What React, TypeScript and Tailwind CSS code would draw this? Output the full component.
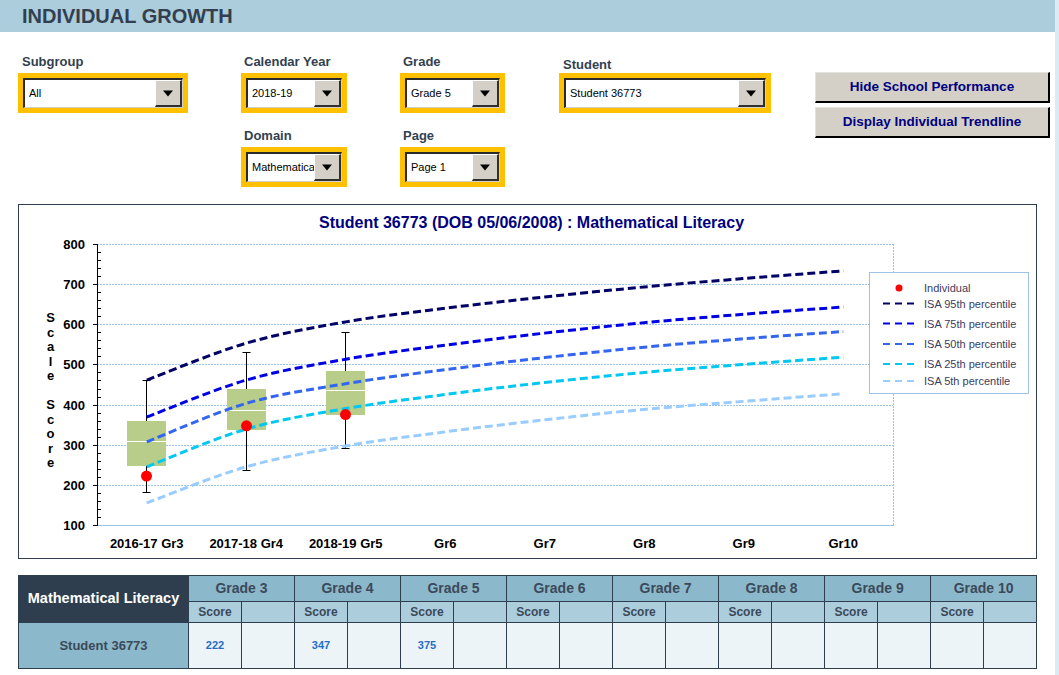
import React from 'react';

// chart geometry (page coordinates)
const Y0 = 525;
const PX = 281 / 700;
const yOf = (v: number) => Y0 - (v - 100) * PX;
const xs = [146.75, 246.25, 345.75, 445.25, 544.75, 644.25, 743.75, 843.25];
const cats = ['2016-17 Gr3', '2017-18 Gr4', '2018-19 Gr5', 'Gr6', 'Gr7', 'Gr8', 'Gr9', 'Gr10'];

const percentiles = [
  { label: 'ISA 95th percentile', color: '#000066', values: [461, 553, 606, 640, 668, 693, 714, 733] },
  { label: 'ISA 75th percentile', color: '#0000e6', values: [369, 461, 513, 548, 578, 604, 625, 643] },
  { label: 'ISA 50th percentile', color: '#3366f0', values: [307, 403, 452, 487, 517, 543, 564, 582] },
  { label: 'ISA 25th percentile', color: '#00c8f0', values: [245, 339, 390, 425, 455, 480, 500, 518] },
  { label: 'ISA 5th percentile', color: '#99ccff', values: [155, 245, 297, 332, 362, 388, 408, 427] },
];

// box plots: pixel values read from the school performance boxes
const boxes = [
  { x: 146.5, top: 421, bottom: 466, median: 441.5, wTop: 380.5, wBottom: 492.5, score: 222 },
  { x: 246.5, top: 389, bottom: 430, median: 410.5, wTop: 352.5, wBottom: 470.5, score: 347 },
  { x: 345.5, top: 371, bottom: 415, median: 390.5, wTop: 332.5, wBottom: 448.5, score: 375 },
];

const smooth = (pts: [number, number][]) => {
  let d = `M${pts[0][0]},${pts[0][1]}`;
  for (let i = 0; i < pts.length - 1; i++) {
    const p0 = pts[i - 1] || pts[i];
    const p1 = pts[i];
    const p2 = pts[i + 1];
    const p3 = pts[i + 2] || p2;
    const c1x = p1[0] + (p2[0] - p0[0]) / 6;
    const c1y = p1[1] + (p2[1] - p0[1]) / 6;
    const c2x = p2[0] - (p3[0] - p1[0]) / 6;
    const c2y = p2[1] - (p3[1] - p1[1]) / 6;
    d += ` C${c1x},${c1y} ${c2x},${c2y} ${p2[0]},${p2[1]}`;
  }
  return d;
};

const Arrow = () => (
  <svg width="12" height="7" viewBox="0 0 12 7">
    <path d="M1 0.5 L11 0.5 L6 6.5 Z" fill="#000" />
  </svg>
);

const Select = ({ value, className }: { value: string; className: string }) => (
  <div className={`bg-[#ffc000] p-[5px] h-[40px] ${className}`}>
    <div className="h-[30px] bg-white border-t-2 border-l-2 border-t-[#2a2a2a] border-l-[#2a2a2a] border-b border-r border-b-[#d4d0c8] border-r-[#d4d0c8] flex items-center overflow-hidden">
      <span className="pl-[4px] text-[11px] text-black whitespace-nowrap flex-1 overflow-hidden">{value}</span>
      <div className="w-[27px] h-[27px] shrink-0 bg-[#d4d0c8] border-t border-l border-t-white border-l-white border-b-2 border-r-2 border-b-[#303030] border-r-[#303030] flex items-center justify-center">
        <Arrow />
      </div>
    </div>
  </div>
);

const Label = ({ children, className = '' }: { children: React.ReactNode; className?: string }) => (
  <div className={`text-[13px] font-bold text-[#333f4f] leading-[16px] ${className}`}>{children}</div>
);

const Chart = () => {
  const minor: number[] = [];
  for (let v = 100; v <= 800; v += 20) if (v % 100 !== 0) minor.push(v);
  const majors = [100, 200, 300, 400, 500, 600, 700, 800];
  const word1 = ['S', 'c', 'a', 'l', 'e'];
  const word2 = ['S', 'c', 'o', 'r', 'e'];
  const legendY = [303.5, 323.5, 344, 364, 381];
  return (
    <svg width="1017" height="353" viewBox="19 205 1017 353" className="block" fontFamily="'Liberation Sans', Arial, sans-serif">
      <text x="531.5" y="228" textAnchor="middle" fontSize="16" fontWeight="bold" fill="#000080">
        Student 36773 (DOB 05/06/2008) : Mathematical Literacy
      </text>

      {/* gridlines */}
      {majors.slice(1).map((v) => (
        <line key={v} x1="97" x2="893" y1={Math.round(yOf(v)) + 0.5} y2={Math.round(yOf(v)) + 0.5} stroke="#9dc3e6" strokeDasharray="2 1" />
      ))}
      <line x1="893.5" x2="893.5" y1="244" y2="525" stroke="#9dc3e6" strokeDasharray="2 1" />
      <line x1="97" x2="894" y1="525.5" y2="525.5" stroke="#9dc3e6" />

      {/* left axis */}
      <line x1="97.5" x2="97.5" y1="244" y2="526" stroke="#000" />
      {majors.map((v) => (
        <line key={v} x1="93" x2="97" y1={Math.round(yOf(v)) + 0.5} y2={Math.round(yOf(v)) + 0.5} stroke="#000" />
      ))}
      {minor.map((v) => (
        <line key={v} x1="98" x2="101" y1={Math.round(yOf(v)) + 0.5} y2={Math.round(yOf(v)) + 0.5} stroke="#000" />
      ))}
      {majors.map((v) => (
        <text key={v} x="85" y={yOf(v) + 5} textAnchor="end" fontSize="13" fontWeight="bold" fill="#000">
          {v}
        </text>
      ))}
      {word1.map((c, i) => (
        <text key={'a' + i} x="50.5" y={322 + i * 14.6} textAnchor="middle" fontSize="13" fontWeight="bold" fill="#000">
          {c}
        </text>
      ))}
      {word2.map((c, i) => (
        <text key={'b' + i} x="50.5" y={409 + i * 14.6} textAnchor="middle" fontSize="13" fontWeight="bold" fill="#000">
          {c}
        </text>
      ))}

      {/* category labels */}
      {cats.map((c, i) => (
        <text key={c} x={xs[i]} y="548" textAnchor="middle" fontSize="13" fontWeight="bold" fill="#000">
          {c}
        </text>
      ))}

      {/* whiskers and boxes */}
      {boxes.map((b) => (
        <g key={b.x}>
          <line x1={b.x} x2={b.x} y1={b.wTop} y2={b.wBottom} stroke="#000" />
          <line x1={b.x - 4} x2={b.x + 4} y1={b.wTop} y2={b.wTop} stroke="#000" />
          <line x1={b.x - 4} x2={b.x + 4} y1={b.wBottom} y2={b.wBottom} stroke="#000" />
          <rect x={b.x - 19.5} y={b.top} width="39" height={b.bottom - b.top} fill="#b7cd89" />
          <line x1={b.x - 19.5} x2={b.x + 19.5} y1={b.median} y2={b.median} stroke="#fff" />
        </g>
      ))}

      {/* percentile curves */}
      {percentiles.map((p) => (
        <path
          key={p.label}
          d={smooth(p.values.map((v, i) => [xs[i], yOf(v)] as [number, number]))}
          fill="none"
          stroke={p.color}
          strokeWidth="3"
          strokeDasharray="8 4"
        />
      ))}

      {/* individual scores */}
      {boxes.map((b) => (
        <circle key={b.x} cx={b.x} cy={yOf(b.score)} r="5.5" fill="#ff0000" />
      ))}

      {/* legend */}
      <rect x="869.5" y="272.5" width="159" height="121" fill="#fff" stroke="#9dc3e6" />
      <circle cx="899" cy="288" r="3.5" fill="#ff0000" />
      <text x="924" y="292" fontSize="11" fill="#3c3c5e">Individual</text>
      {percentiles.map((p, i) => (
        <g key={p.label}>
          <line x1="883" x2="914" y1={legendY[i]} y2={legendY[i]} stroke={p.color} strokeWidth="2" strokeDasharray="7 5" />
          <text x="924" y={legendY[i] + 4} fontSize="11" fill="#3c3c5e">
            {p.label}
          </text>
        </g>
      ))}
    </svg>
  );
};

const grades = ['Grade 3', 'Grade 4', 'Grade 5', 'Grade 6', 'Grade 7', 'Grade 8', 'Grade 9', 'Grade 10'];
const scores = ['222', '347', '375', '', '', '', '', ''];

const ScoreTable = () => (
  <table className="table-fixed border-collapse w-[1019px]">
    <colgroup>
      <col className="w-[170px]" />
      {Array.from({ length: 16 }).map((_, i) => (
        <col key={i} className="w-[53px]" />
      ))}
    </colgroup>
    <thead>
      <tr className="h-[26px]">
        <th rowSpan={2} className="bg-[#2e3e4e] text-white text-[14.5px] font-bold border border-[#2e3e4e] p-0">
          Mathematical Literacy
        </th>
        {grades.map((g) => (
          <th key={g} colSpan={2} className="bg-[#8cb8cb] text-[#3b4a5a] text-[14px] font-bold border border-[#2e3e4e] p-0">
            {g}
          </th>
        ))}
      </tr>
      <tr className="h-[21px]">
        {grades.map((g) => (
          <React.Fragment key={g}>
            <th className="bg-[#abcddc] text-[#3b4a5a] text-[12px] font-bold border border-[#2e3e4e] p-0">Score</th>
            <th className="bg-[#abcddc] border border-[#2e3e4e] p-0"></th>
          </React.Fragment>
        ))}
      </tr>
    </thead>
    <tbody>
      <tr className="h-[46px]">
        <td className="bg-[#8cb8cb] text-[#3b4a5a] text-[13px] font-bold text-center border border-[#2e3e4e] p-0">
          Student 36773
        </td>
        {scores.map((s, i) => (
          <React.Fragment key={i}>
            <td className="bg-[#edf4f8] text-[#1f6fc4] text-[11px] font-bold text-center border border-[#2e3e4e] p-0">{s}</td>
            <td className="bg-[#edf4f8] border border-[#2e3e4e] p-0"></td>
          </React.Fragment>
        ))}
      </tr>
    </tbody>
  </table>
);

export default function App() {
  return (
    <div className="flex w-[1059px] h-[675px] bg-white font-['Liberation_Sans',Arial,sans-serif] overflow-hidden">
      <div className="w-[1055px] shrink-0">
        <div className="h-[32px] bg-[#abcddc] flex items-center pl-[22px]">
          <h1 className="text-[20px] font-bold text-[#333f4f] leading-none">INDIVIDUAL GROWTH</h1>
        </div>

        <div className="flex pl-[18px] pt-[22px]">
          <div className="w-[170px]">
            <Label className="pl-[4px]">Subgroup</Label>
            <Select value="All" className="w-[170px] mt-[3px]" />
          </div>
          <div className="w-[106px] ml-[53px]">
            <Label className="pl-[3px]">Calendar Year</Label>
            <Select value="2018-19" className="w-[106px] mt-[3px]" />
            <Label className="pl-[3px] mt-[15px]">Domain</Label>
            <Select value="Mathematical Literacy" className="w-[106px] mt-[3px]" />
          </div>
          <div className="w-[105px] ml-[53px]">
            <Label className="pl-[3px]">Grade</Label>
            <Select value="Grade 5" className="w-[105px] mt-[3px]" />
            <Label className="pl-[3px] mt-[15px]">Page</Label>
            <Select value="Page 1" className="w-[105px] mt-[3px]" />
          </div>
          <div className="w-[212px] ml-[54px]">
            <Label className="pl-[4px] mt-[3px]">Student</Label>
            <Select value="Student 36773" className="w-[212px]" />
          </div>
          <div className="w-[235px] ml-[44px] pt-[18px] flex flex-col gap-[4px]">
            <button className="h-[31px] bg-[#d4d0c8] border-t border-l border-t-[#e4e2dc] border-l-[#e4e2dc] border-b-2 border-r-2 border-b-black border-r-black text-[13.5px] font-bold text-[#000080]">
              Hide School Performance
            </button>
            <button className="h-[31px] bg-[#d4d0c8] border-t border-l border-t-[#e4e2dc] border-l-[#e4e2dc] border-b-2 border-r-2 border-b-black border-r-black text-[13.5px] font-bold text-[#000080]">
              Display Individual Trendline
            </button>
          </div>
        </div>

        <div className="ml-[18px] mt-[17px] w-[1019px] h-[355px] border border-[#2f3f4f]">
          <Chart />
        </div>

        <div className="ml-[18px] mt-[16px]">
          <ScoreTable />
        </div>
      </div>
      <div className="w-[4px] h-full bg-[#dcebf3]" />
    </div>
  );
}
